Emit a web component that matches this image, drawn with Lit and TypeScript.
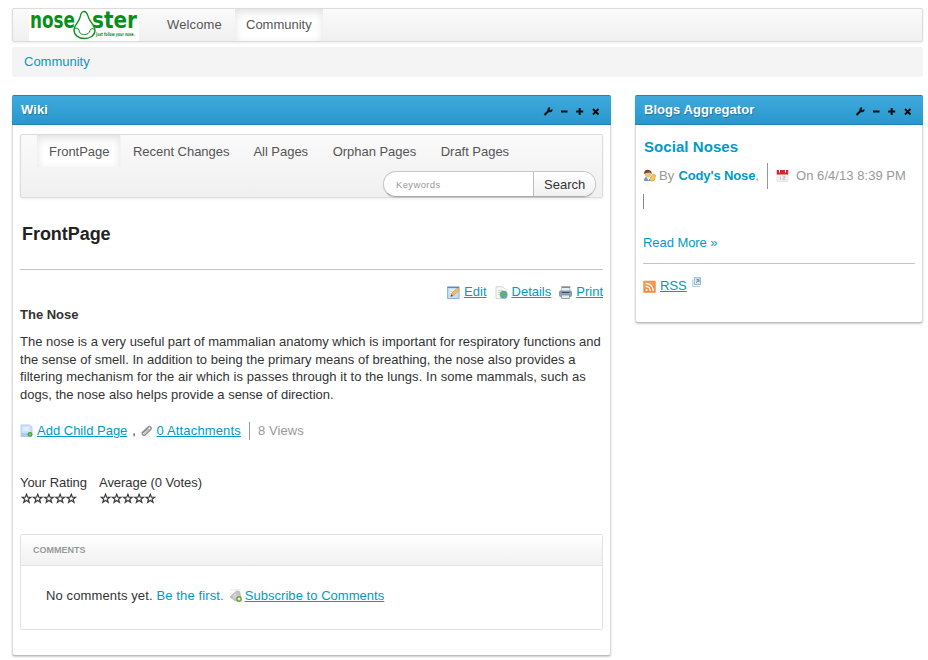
import { LitElement, html, css, svg } from "lit";
import { customElement, property } from "lit/decorators.js";

const base = css`
  :host { display: block; }
  * { box-sizing: border-box; }
  a { color: #009ac7; text-decoration: none; }
  a.u { text-decoration: underline; text-underline-offset: 1px; text-decoration-thickness: 1px; }
  svg { display: block; flex: none; }
`;

const glyphs: Record<string, unknown> = {
  edit: svg`<rect x=".6" y="1" width="11.500" height="11.500" fill="#c4def8" stroke="#86aedb" stroke-width=".9"/><path d="M.5 1.300h11.500" stroke="#4a78b5"/><path d="M2.500 4h5M2.500 6.500h3" stroke="#fff"/><path d="M4 10l1-3L10.500 2l2 2-5.500 5z" fill="#f9c25e" stroke="#c68a35" stroke-width=".6"/><path d="M3.600 10.700l.9-2.300 1.500 1.600z" fill="#5b4426"/>`,
  details: svg`<path d="M1 .8h7l3 3v8.700h-10z" fill="#f6f7f6" stroke="#d2d2d2" stroke-width=".9"/><path d="M3 4.500h5M3 6.500h4M3 8.500h2" stroke="#cfd4cf"/><circle cx="8.700" cy="8.700" r="3.900" fill="#6c9fd0"/><path d="M5.200 8l2-2.700 3 .5 1.400 2-2 1.500-1 2.800-2.300-1.500z" fill="#5fb55a"/>`,
  print: svg`<path d="M3 1.500h7.500l.8 4H2z" fill="#e8eff6" stroke="#a6b0bb" stroke-width=".8"/><path d="M2.300 1h9" stroke="#59636c" stroke-width="1.100"/><rect x=".5" y="5" width="12" height="5.500" rx="1" fill="#93a3b8" stroke="#77859a" stroke-width=".8"/><path d="M2.500 6.500h8" stroke="#434d5c"/><path d="M2.500 9h8v3.500h-8z" fill="#e9eef5" stroke="#838d99" stroke-width=".8"/>`,
  child: svg`<path d="M1 1h8.500l2.500 2v9.500h-11z" fill="#cfe3f8" stroke="#a3c3e8" stroke-width=".8"/><path d="M3 4h6M3 6h6" stroke="#f2f8ff"/><path d="M1.300 9h10v3h-10z" fill="#a9ccef"/><circle cx="10" cy="10.300" r="2.400" fill="#3e9c35"/><path d="M8.700 10.300h2.600M10 9v2.600" stroke="#a7dd92" stroke-width=".8"/>`,
  clip: svg`<path d="M1.800 9L8 3.200c1.800-1.500 4.200.3 2.700 2.200L5.300 10.700c-1.700 1.500-4-.2-2.500-2L8 4.200" fill="none" stroke="#8f8f8f" stroke-width="1.500"/><path d="M4 9.500l5-4.700" stroke="#aaa" stroke-width="1"/>`,
  tag: svg`<path d="M1 8l6.500-6 3 .5 1 5-5 4.500z" fill="#c4c4c4" stroke="#b0b0b0" stroke-width=".8"/><path d="M1 .9h10" stroke="#ddd" stroke-width=".7"/><path d="M4 7.500l3-2.500M5.500 9l3-2.500" stroke="#e8e8e8"/><circle cx="10" cy="10" r="2.200" fill="#e6f2dd" stroke="#6aa343" stroke-width="1.500"/>`,
  user: svg`<path d="M.8 12c0-3 1.700-4.500 4.200-4.500S9.500 9 10 12z" fill="#6f9bc0"/><path d="M3.500 8l2 3.500L8 8z" fill="#f1f1f1"/><circle cx="5" cy="5" r="3.200" fill="#efbf8e"/><path d="M1.200 5.200C.7 2 2.700.6 5 .8S9 2.500 8.800 5L7 3.500 3 4z" fill="#74491f"/><path d="M6.500 10.500L10 5l2.500 1.200-1 5-3 1z" fill="#f5cb55" stroke="#d59c35" stroke-width=".7"/>`,
  cal: svg`<rect x="1" y="1.500" width="11" height="11" fill="#f2f2f2" stroke="#ddd" stroke-width=".7"/><path d="M.8 1h11.400v4.500H.8z" fill="#d9232e"/><path d="M3.500 1v2.500M9.500 1v2.500" stroke="#fff" stroke-width="1"/><path d="M4.500 7.500v3.500M7 7.500h2v1.600h-2v1.600h2.500" fill="none" stroke="#bbb" stroke-width=".8"/>`,
  rss: svg`<rect x=".3" y=".8" width="12.400" height="12" rx=".8" fill="#f48a3d"/><path d="M1 1.500h11v4L1 9z" fill="#f9a768" opacity=".6"/><circle cx="3.600" cy="10" r="1.100" fill="#fff"/><path d="M2.600 6.300a4.500 4.500 0 0 1 4.600 4.700M2.600 3.300a7.600 7.600 0 0 1 7.600 7.700" fill="none" stroke="#fff" stroke-width="1.300"/>`,
  pop: svg`<path d="M.8 2.500v7h7" fill="none" stroke="#aecadb"/><rect x="2.300" y=".7" width="6.200" height="6.800" fill="#dcebf4" stroke="#8db2c9" stroke-width=".9"/><path d="M4 5.700L6.500 3.300M4.500 2.700h2.400v2.400" fill="none" stroke="#4a7a98" stroke-width="1"/>`,
};

@customElement("ui-icon")
class UiIcon extends LitElement {
  static styles = css`:host { display: block; flex: none; } svg { display: block; }`;
  @property() name = "";
  render() {
    return html`<svg width="13" height="13" viewBox="0 0 13 13">${glyphs[this.name]}</svg>`;
  }
}

@customElement("portlet-panel")
class PortletPanel extends LitElement {
  static styles = [base, css`
    .panel { height: 100%; background: #fff; border: 1px solid #d9d9d9; border-top: 0; border-bottom-color: #bdbdbd; border-radius: 3px; box-shadow: 0 1px 2px rgba(0,0,0,.2); }
    .bar { height: 30px; margin: 0 -1px; padding: 0 10px 0 9px; display: flex; justify-content: space-between; border: 1px solid #1c84b8; border-width: 1px 0; border-radius: 2px 2px 0 0;
      background: linear-gradient(#3fa9dc, #2997ce); color: #fff; font-weight: bold; font-size: 13px; line-height: 28px; text-shadow: 1px 1px 0 rgba(0,0,0,.25); }
    .tools { margin-top: 10px; }
    .body { padding: 0 8px; }
    .title { letter-spacing: .06px; }
  `];
  @property() heading = "";
  render() {
    return html`<section class="panel">
      <header class="bar"><span class="title">${this.heading}</span>
        <svg class="tools" width="58" height="11" viewBox="0 0 58 11" fill="none" stroke="#0c0c0c">
          <path d="M1.500 9L5.500 5" stroke-width="2.200"/><path d="M9.300 3.600A2.300 2.300 0 1 1 6.900 1.400L6.300 3.600 7.300 4.400z" fill="#0c0c0c" stroke-width=".6"/>
          <path d="M18 5.500h6.500" stroke-width="2"/>
          <path d="M33.200 5.500h7M36.700 2v7" stroke-width="2"/>
          <path d="M50 3l5.500 5.500M55.500 3L50 8.500" stroke-width="2"/>
        </svg></header>
      <div class="body"><slot></slot></div>
    </section>`;
  }
}

@customElement("app-root")
class AppRoot extends LitElement {
  static styles = [base, css`
    :host { height: 660px; overflow: hidden; background: #fff; font: 13px/18px "Liberation Sans", Arial, sans-serif; color: #333; padding: 8px 5px 0 12px; box-sizing: border-box; }
    .nav { height: 34px; border: 1px solid #dcdcdc; border-radius: 2px; background: linear-gradient(#fafafa, #f0f0f0); display: flex; padding-left: 16px; color: #555; line-height: 32px; box-shadow: 0 1px 3px rgba(0,0,0,.08); }
    .logo { background: #fff; width: 110px; height: 32px; margin-right: 17px; }
    .logo svg { overflow: visible; }
    .tab { padding: 0 11px; }
    .on { background: #fff; box-shadow: inset 0 3px 8px rgba(0,0,0,.125); }
    .nav .welcome { width: 79px; letter-spacing: .12px; }
    .nav .comm { width: 88px; }
    .crumb { margin-top: 5px; height: 30px; background: #f4f4f4; border-radius: 3px; padding-left: 12px; line-height: 30px; }
    .cols { margin-top: 18px; display: grid; grid-template-columns: 599px 288px; column-gap: 24px; align-items: start; }
    .wiki { height: 561px; }
    .blogs { height: 228px; }
    .sub { margin-top: 9px; height: 64px; border: 1px solid #dcdcdc; border-radius: 2px; background: linear-gradient(#fafafa, #f0f0f0); box-shadow: 0 1px 3px rgba(0,0,0,.08); color: #555; }
    .tabs { display: flex; height: 36px; padding-left: 16px; }
    .tabs .tab { height: 32px; line-height: 33px; padding: 0 12px; white-space: nowrap; letter-spacing: -.03px; }
    .tabs .on { width: 84px; border-right: 1px solid #f3f3f3; }
    .tabs .tab:nth-child(n+4) { margin-left: .6px; }
    .search { display: flex; width: 213px; height: 26px; margin-left: auto; margin-right: 6px; border: 1px solid #c6c6c6; border-bottom-color: #a8a8a8; border-radius: 13px; overflow: hidden; background: #fff; line-height: 25px; box-shadow: 0 1px 1px rgba(0,0,0,.1); }
    .kw { width: 149px; padding-left: 12px; font-size: 9.5px; color: #999; letter-spacing: .35px; line-height: 26px; }
    .go { flex: 1; border-left: 1px solid #bbb; padding-left: 10px; color: #333; background: linear-gradient(#fff, #f1f1f1); }
    .wrap { margin: 0 -1px; }
    h1 { margin: 24px 0 0 2px; font-size: 18px; line-height: 24px; color: #222; letter-spacing: -.05px; }
    hr { border: 0; height: 1px; background: #c4c4c4; margin: 23px 0 0; }
    .row { display: flex; align-items: center; height: 18px; }
    .actions { justify-content: flex-end; margin-top: 13px; }
    .actions a { margin: 0 8px 0 4px; }
    .actions a:last-child { margin-right: 0; }
    ui-icon { position: relative; top: 0; }
    h2 { font-size: 13px; line-height: 18px; margin: 5px 0 9px; }
    p { margin: 0; line-height: 17.7px; white-space: nowrap; }
    .l1 { letter-spacing: -.01px; }
    .l2 { letter-spacing: .02px; }
    .l3 { letter-spacing: .068px; }
    .meta { margin-top: 18px; }
    .meta a { margin: 0 5px 0 4px; }
    .meta .att { letter-spacing: .15px; margin-left: 4px; margin-right: 8px; }
    .meta .sep { width: 1px; height: 18px; background: #999; margin: 0 8px 0 0; }
    .grey { color: #999; letter-spacing: .1px; }
    .rate { display: flex; margin-top: 34px; letter-spacing: -.05px; }
    .rate div { width: 79px; white-space: nowrap; }
    .stars { margin: 1px 0 0 1px; }
    .comments { margin-top: 29px; height: 96px; border: 1px solid #e2e2e2; border-radius: 2px; }
    .ch { height: 31px; border-bottom: 1px solid #e2e2e2; background: linear-gradient(#fff, #f1f1f1); font-size: 9px; font-weight: bold; line-height: 30px; color: #999; padding-left: 12px; }
    .cb { margin: 21px 0 0 25px; white-space: pre; letter-spacing: .12px; }
    .cb ui-icon { margin: 0 3px 0 5px; }
    .cb .u { letter-spacing: .04px; }
    .bt { margin: 12px 0 0 1px; font-weight: bold; font-size: 15px; line-height: 20px; letter-spacing: .06px; }
    .by { height: 26px; margin-top: 6px; color: #999; white-space: nowrap; }
    .by .who { margin-left: 3px; width: 108px; letter-spacing: .2px; }
    .by b { letter-spacing: -.12px; }
    .by .sep { width: 1px; height: 26px; background: #999; margin: 0 8px 0 0; }
    .by ui-icon { top: -1px; }
    .by .on-date { margin-left: 7px; letter-spacing: .05px; }
    .tick { width: 1px; height: 15px; background: #888; margin-top: 5px; }
    .more { margin-top: 25px; letter-spacing: -.06px; }
    .bhr { margin-top: 11px; }
    .rss { margin-top: 13px; }
    .rss a { margin: 0 5px 0 4px; }
    .rss ui-icon:last-child { top: -3px; }
  `];

  private stars() {
    return html`<svg class="stars" width="57" height="12" viewBox="0 0 57 12">
      ${[0, 1, 2, 3, 4].map((i) => svg`<path transform="translate(${i * 11.2} 0)" d="M5.500 1.300l1.100 2.800 3.200.1-2.500 2 .9 3.100-2.700-1.800-2.700 1.800.9-3.100L1.200 4.200l3.200-.1z" fill="#fff" stroke="#3a3a3a" stroke-width="1.200"/>`)}
    </svg>`;
  }

  render() {
    return html`
      <nav class="nav">
        <div class="logo"><svg width="110" height="32" viewBox="0 0 110 32" fill="#069018">
          <text x="1" y="18.500" font-family="DejaVu Sans" font-weight="bold" font-size="22.500" textLength="45" lengthAdjust="spacingAndGlyphs">nose</text>
          <text x="63" y="18.500" font-family="DejaVu Sans" font-weight="bold" font-size="22.500" textLength="45" lengthAdjust="spacingAndGlyphs">ster</text>
          <path d="M55 2.500c-3 0-3.500 3-4 6-.8 4-6 8-6 12.500 0 5 4.500 8.500 10.500 8.500s10.500-3.500 10.500-8c0-4.500-5-8.500-6.500-13-1-3-1.500-6-4.500-6z" fill="#fff" stroke="#069018" stroke-width="1.300"/>
          <path d="M45.500 20c1.500-1.500 4-1 4.500 1 .3 3.500 2.500 4.500 5.500 4.500s5-1.500 5.500-4c.5-2 3-2.500 4.500-1" fill="none" stroke="#069018" stroke-width="1"/>
          <text x="67" y="26.500" font-family="DejaVu Sans" font-weight="bold" font-size="5" textLength="38.500" lengthAdjust="spacingAndGlyphs">Just follow your nose.</text>
        </svg></div>
        <span class="tab welcome">Welcome</span><span class="tab on comm">Community</span>
      </nav>
      <div class="crumb"><a>Community</a></div>
      <main class="cols">
        <portlet-panel heading="Wiki" class="wiki"><div class="wrap">
          <div class="sub">
            <div class="tabs"><span class="tab on">FrontPage</span><span class="tab">Recent Changes</span><span class="tab">All Pages</span><span class="tab">Orphan Pages</span><span class="tab">Draft Pages</span></div>
            <div class="search"><span class="kw">Keywords</span><span class="go">Search</span></div>
          </div>
          <h1>FrontPage</h1>
          <hr>
          <div class="row actions"><ui-icon name="edit"></ui-icon><a class="u">Edit</a><ui-icon name="details"></ui-icon><a class="u">Details</a><ui-icon name="print"></ui-icon><a class="u">Print</a></div>
          <h2>The Nose</h2>
          <p><span class="l1">The nose is a very useful part of mammalian anatomy which is important for respiratory functions and</span><br><span class="l2">the sense of smell. In addition to being the primary means of breathing, the nose also provides a</span><br><span class="l3">filtering mechanism for the air which is passes through it to the lungs. In some mammals, such as</span><br>dogs, the nose also helps provide a sense of direction.</p>
          <div class="row meta"><ui-icon name="child"></ui-icon><a class="u">Add Child Page</a><span>,&nbsp;</span><ui-icon name="clip"></ui-icon><a class="u att">0 Attachments</a><i class="sep"></i><span class="grey">8 Views</span></div>
          <div class="rate"><div>Your Rating${this.stars()}</div><div>Average (0 Votes)${this.stars()}</div></div>
          <div class="comments"><div class="ch">COMMENTS</div>
            <div class="row cb"><span>No comments yet. </span><a>Be the first.</a><ui-icon name="tag"></ui-icon><a class="u">Subscribe to Comments</a></div></div>
        </div></portlet-panel>
        <portlet-panel heading="Blogs Aggregator" class="blogs"><div class="wrap">
          <div class="bt"><a>Social Noses</a></div>
          <div class="row by"><ui-icon name="user"></ui-icon><span class="who">By <b><a>Cody's Nose</a></b>,</span><i class="sep"></i><ui-icon name="cal"></ui-icon><span class="on-date">On 6/4/13 8:39 PM</span></div>
          <div class="tick"></div>
          <div class="more"><a>Read More »</a></div>
          <hr class="bhr">
          <div class="row rss"><ui-icon name="rss"></ui-icon><a class="u">RSS</a><ui-icon name="pop"></ui-icon></div>
        </div></portlet-panel>
      </main>`;
  }
}
